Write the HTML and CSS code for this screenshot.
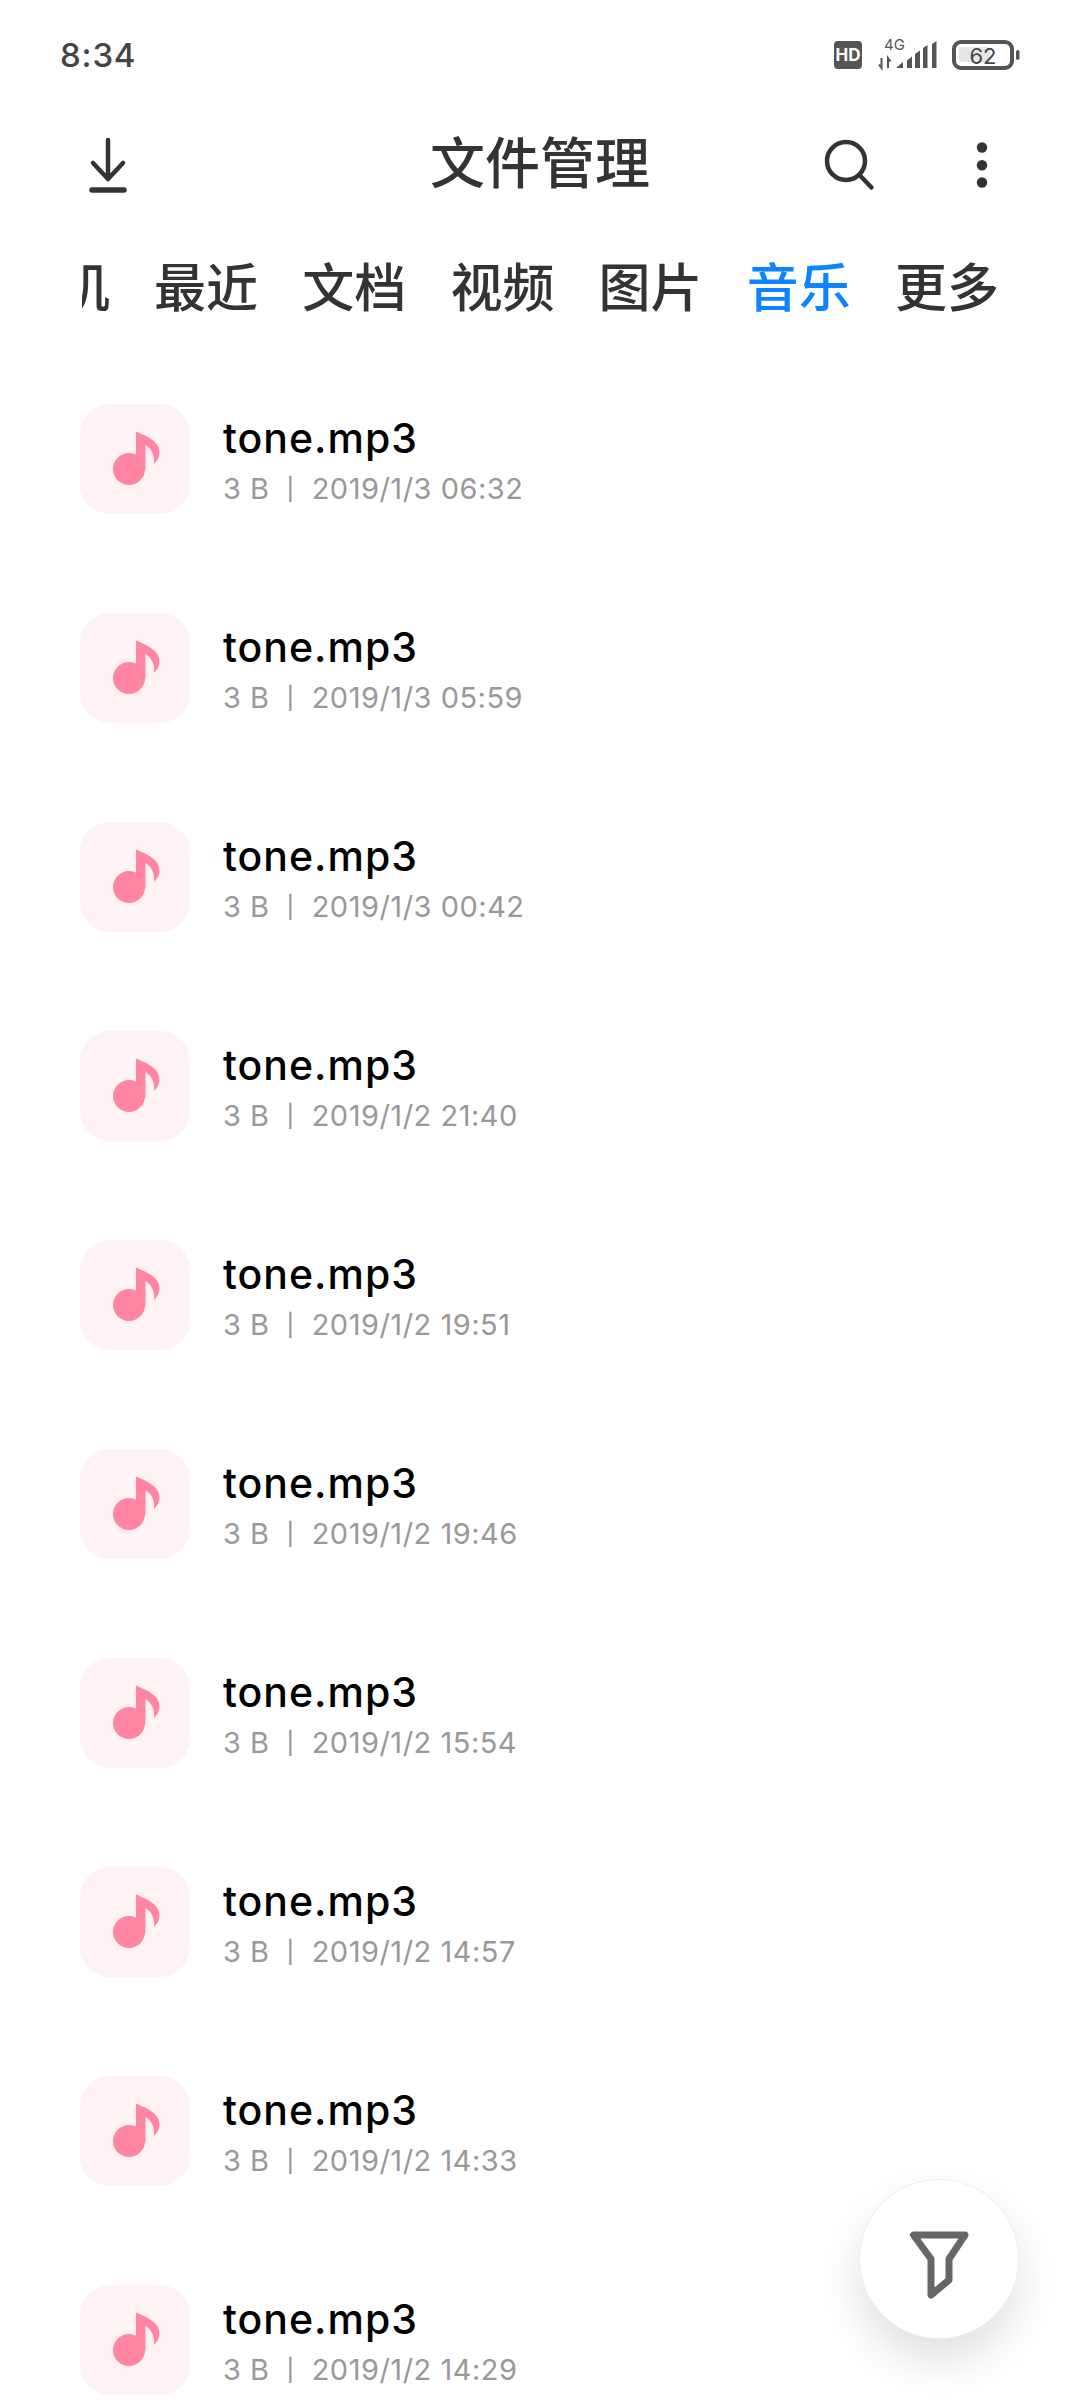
FILE: index.html
```html
<!DOCTYPE html>
<html lang="zh-CN">
<head>
    <meta charset="UTF-8">
    <title>文件管理</title>
    <link rel="stylesheet" href="styles.css">
</head>
<body>
    <!-- Music note used by every row -->
    <svg class="defs" width="0" height="0">
        <symbol id="note" viewBox="0 0 110 110">
            <path d="M56 27.5C66 32 80 37 79.5 49C79.5 53 77 57 74 60C75 52 72 45 65.5 41V66H56Z"/>
            <circle cx="49" cy="65" r="16"/>
        </symbol>
    </svg>

    <!-- Status Bar -->
    <div class="status-bar">
        <span class="clock">8:34</span>
        <svg class="status-icons" width="200" height="40" viewBox="820 35 200 40">
            <rect x="834" y="41" width="28" height="28" rx="4" fill="#555"/>
            <text x="848" y="61" class="hd">HD</text>
            <text x="884" y="50" class="net">4G</text>
            <path d="M881.500 58v10l-2.500-3.500M888 68V58l2.500 3.500" class="arrows"/>
            <path d="M896 68l7-6v6zM907 60.500l5-4V68h-5zM915 54l5-3.500V68h-5zM923 48l4.500-3V68H923zM932 44l4.500-3V68H932z" fill="#555"/>
            <rect x="954" y="42" width="58" height="26" rx="7" class="batt"/>
            <rect x="959" y="47" width="31" height="15" rx="2" fill="#e6e6e6"/>
            <rect x="1016" y="50" width="3.500" height="10" rx="1.700" fill="#555"/>
            <text x="983" y="63.500" class="level">62</text>
        </svg>
    </div>

    <!-- Title Bar -->
    <header class="title-bar">
        <svg class="icon" width="60" height="60" viewBox="0 0 60 60">
            <path d="M30 4V43M15 27L30 43L45 27" class="line"/>
            <path d="M14 54H46" class="line thick"/>
        </svg>
        <h1>文件管理</h1>
        <svg class="icon search" width="60" height="60" viewBox="0 0 60 60">
            <circle cx="26" cy="25" r="19" class="line"/>
            <path d="M39.500 39L51.500 51.500" class="line"/>
        </svg>
        <svg class="icon more" width="20" height="60" viewBox="0 0 20 60">
            <circle cx="10" cy="11.500" r="5.200"/>
            <circle cx="10" cy="29.300" r="5.200"/>
            <circle cx="10" cy="46.500" r="5.200"/>
        </svg>
    </header>

    <!-- Category Tabs -->
    <nav class="tabs">
        <span>手机</span>
        <span>最近</span>
        <span>文档</span>
        <span>视频</span>
        <span>图片</span>
        <span class="active">音乐</span>
        <span>更多</span>
    </nav>

    <!-- File List -->
    <ul class="file-list">
        <li class="file">
            <div class="tile"><svg width="110" height="110"><use href="#note"/></svg></div>
            <div class="info">
                <div class="name">tone.mp3</div>
                <div class="meta">3 B<span class="sep">|</span>2019/1/3 06:32</div>
            </div>
        </li>
        <li class="file">
            <div class="tile"><svg width="110" height="110"><use href="#note"/></svg></div>
            <div class="info">
                <div class="name">tone.mp3</div>
                <div class="meta">3 B<span class="sep">|</span>2019/1/3 05:59</div>
            </div>
        </li>
        <li class="file">
            <div class="tile"><svg width="110" height="110"><use href="#note"/></svg></div>
            <div class="info">
                <div class="name">tone.mp3</div>
                <div class="meta">3 B<span class="sep">|</span>2019/1/3 00:42</div>
            </div>
        </li>
        <li class="file">
            <div class="tile"><svg width="110" height="110"><use href="#note"/></svg></div>
            <div class="info">
                <div class="name">tone.mp3</div>
                <div class="meta">3 B<span class="sep">|</span>2019/1/2 21:40</div>
            </div>
        </li>
        <li class="file">
            <div class="tile"><svg width="110" height="110"><use href="#note"/></svg></div>
            <div class="info">
                <div class="name">tone.mp3</div>
                <div class="meta">3 B<span class="sep">|</span>2019/1/2 19:51</div>
            </div>
        </li>
        <li class="file">
            <div class="tile"><svg width="110" height="110"><use href="#note"/></svg></div>
            <div class="info">
                <div class="name">tone.mp3</div>
                <div class="meta">3 B<span class="sep">|</span>2019/1/2 19:46</div>
            </div>
        </li>
        <li class="file">
            <div class="tile"><svg width="110" height="110"><use href="#note"/></svg></div>
            <div class="info">
                <div class="name">tone.mp3</div>
                <div class="meta">3 B<span class="sep">|</span>2019/1/2 15:54</div>
            </div>
        </li>
        <li class="file">
            <div class="tile"><svg width="110" height="110"><use href="#note"/></svg></div>
            <div class="info">
                <div class="name">tone.mp3</div>
                <div class="meta">3 B<span class="sep">|</span>2019/1/2 14:57</div>
            </div>
        </li>
        <li class="file">
            <div class="tile"><svg width="110" height="110"><use href="#note"/></svg></div>
            <div class="info">
                <div class="name">tone.mp3</div>
                <div class="meta">3 B<span class="sep">|</span>2019/1/2 14:33</div>
            </div>
        </li>
        <li class="file">
            <div class="tile"><svg width="110" height="110"><use href="#note"/></svg></div>
            <div class="info">
                <div class="name">tone.mp3</div>
                <div class="meta">3 B<span class="sep">|</span>2019/1/2 14:29</div>
            </div>
        </li>
    </ul>

    <!-- Filter Button -->
    <button class="fab" type="button">
        <svg width="158" height="158" viewBox="0 0 158 158">
            <path d="M53.500 55H105L89 79V100L71 115V79Z"/>
        </svg>
    </button>
</body>
</html>
```

FILE: styles.css
```css
/* General Page Styling */
html, body {
    margin: 0;
    height: 2400px;
    overflow: hidden;
    background-color: #ffffff;
    font-family: Inter, "Noto Sans CJK SC", sans-serif;
}

.defs {
    position: absolute;
}

/* Status Bar */
.status-bar {
    display: flex;
    align-items: center;
    justify-content: space-between;
    height: 40px;
    padding: 35px 60px 0;
}

.clock {
    font-size: 33px;
    font-weight: 500;
    letter-spacing: 0.8px;
    color: #444;
}

.status-icons {
    flex: none;
}

.status-icons text {
    font-family: Inter, sans-serif;
    text-anchor: middle;
}

.status-icons .hd {
    font-size: 17px;
    font-weight: 700;
    fill: #fff;
}

.status-icons .net {
    font-size: 15px;
    text-anchor: start;
    fill: #555;
}

.status-icons .level {
    font-size: 22px;
    fill: #444;
}

.status-icons .arrows {
    fill: none;
    stroke: #555;
    stroke-width: 2;
}

.status-icons .batt {
    fill: none;
    stroke: #555;
    stroke-width: 4;
}

/* Title Bar */
.title-bar {
    display: flex;
    align-items: center;
    height: 60px;
    margin-top: 61px;
    padding-left: 78px;
    padding-right: 88px;
}

.title-bar h1 {
    margin: 0 0 6px 292px;
    font-size: 55px;
    font-weight: 500;
    line-height: 60px;
    color: #333;
}

.icon {
    flex: none;
}

.icon .line {
    fill: none;
    stroke: #333;
    stroke-width: 4.5;
    stroke-linecap: round;
    stroke-linejoin: round;
}

.icon .thick {
    stroke-width: 5.5;
}

.search {
    margin-left: auto;
    margin-right: 92px;
}

.more circle {
    fill: #333;
}

/* Category Tabs */
.tabs {
    display: flex;
    justify-content: flex-end;
    gap: 44.2px;
    overflow: hidden;
    margin: 57px 0 0 82px;
    padding-right: 81px;
    font-size: 52px;
    font-weight: 500;
    line-height: 72px;
    color: #333;
}

.tabs span {
    flex: none;
}

.tabs .active {
    color: #0d84ff;
}

/* File List */
.file-list {
    list-style: none;
    margin: 0;
    padding: 79px 0 0 80px;
}

.file {
    display: flex;
    align-items: center;
    height: 110px;
    margin-bottom: 99px;
}

.tile {
    flex: none;
    width: 110px;
    height: 110px;
    border-radius: 30px;
    background-color: #fff2f5;
    margin-right: 33px;
}

.tile svg {
    display: block;
    fill: #ff85a2;
}

.info {
    padding-top: 2px;
}

.name {
    font-size: 41px;
    font-weight: 500;
    letter-spacing: 1px;
    line-height: 52px;
    color: #000;
}

.meta {
    margin-top: 6px;
    font-size: 29px;
    letter-spacing: 0.5px;
    line-height: 38px;
    color: #999;
}

.sep {
    margin: 0 17px;
    font-size: 22px;
    font-weight: 500;
    vertical-align: 2px;
}

/* Filter Button */
.fab {
    position: absolute;
    left: 859px;
    top: 2179px;
    width: 160px;
    height: 160px;
    padding: 0;
    border: 1px solid #eeeeee;
    border-radius: 50%;
    background-color: #ffffff;
    box-shadow: 0 22px 44px rgba(0, 0, 0, 0.12);
}

.fab svg {
    display: block;
    fill: none;
    stroke: #666;
    stroke-width: 7;
    stroke-linejoin: round;
}
```
